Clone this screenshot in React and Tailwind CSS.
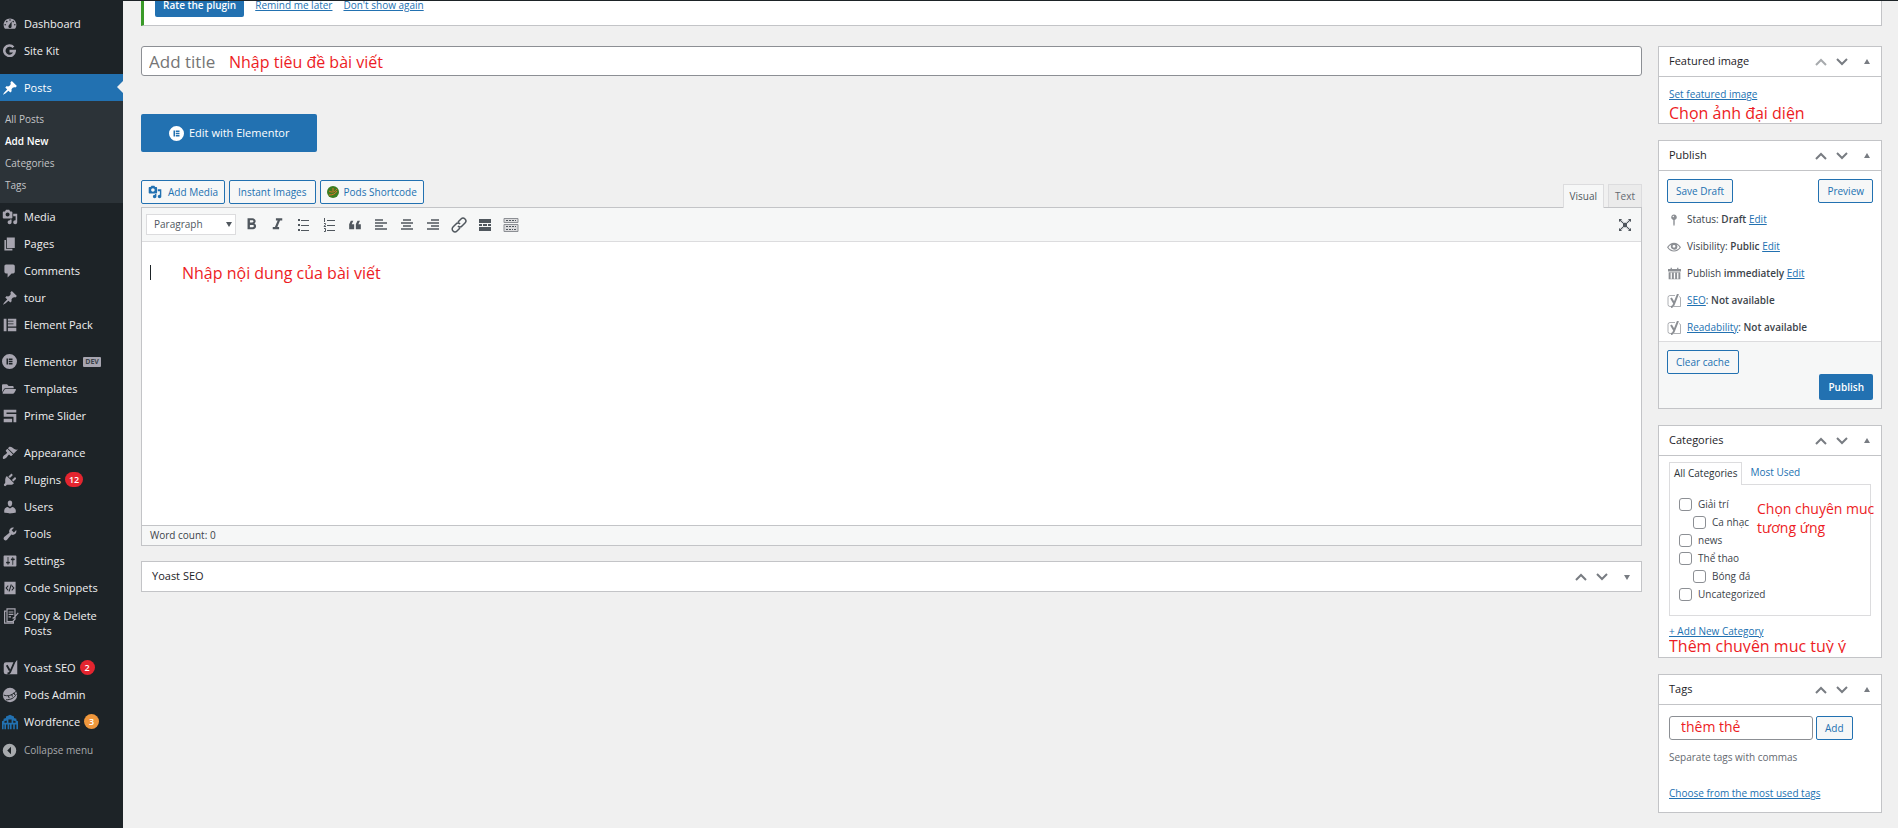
import { useState } from 'react'
import { FaFolderOpen } from 'react-icons/fa'
import { MdFormatBold, MdFormatItalic, MdFormatQuote } from 'react-icons/md'

const PATHS = {
  dashboard: 'M3.76 16h12.48c1.1-1.37 1.76-3.11 1.76-5 0-4.42-3.58-8-8-8s-8 3.58-8 8c0 1.89.66 3.63 1.76 5zM10 4c.55 0 1 .45 1 1s-.45 1-1 1-1-.45-1-1 .45-1 1-1zM6 6c.55 0 1 .45 1 1s-.45 1-1 1-1-.45-1-1 .45-1 1-1zm8 0c.55 0 1 .45 1 1s-.45 1-1 1-1-.45-1-1 .45-1 1-1zm-5.37 5.55L12 7v6c0 1.1-.9 2-2 2s-2-.9-2-2c0-.57.24-1.08.63-1.45zM4 10c.55 0 1 .45 1 1s-.45 1-1 1-1-.45-1-1 .45-1 1-1zm12 0c.55 0 1 .45 1 1s-.45 1-1 1-1-.45-1-1 .45-1 1-1z',
  pin: 'M10.44 3.02l1.82-1.82 6.36 6.35-1.83 1.82c-1.05-.68-2.48-.57-3.41.36l-.75.75c-.92.93-1.04 2.35-.35 3.41l-1.83 1.82-2.41-2.41-2.8 2.79c-.42.42-3.38 2.71-3.8 2.29s1.86-3.39 2.28-3.81l2.79-2.79L4.1 9.36l1.83-1.82c1.05.69 2.48.57 3.4-.36l.75-.75c.93-.92 1.05-2.35.36-3.41z',
  media: 'M13 11V4c0-.55-.45-1-1-1h-1.67L9 1H5L3.67 3H2c-.55 0-1 .45-1 1v7c0 .55.45 1 1 1h10c.55 0 1-.45 1-1zM7 4.5c1.38 0 2.5 1.12 2.5 2.5S8.38 9.5 7 9.5 4.5 8.38 4.5 7 5.62 4.5 7 4.5zM14 6h5v10.5c0 1.38-1.12 2.5-2.5 2.5S14 17.88 14 16.5s1.12-2.5 2.5-2.5c.17 0 .34.02.5.05V9h-3V6zm-4 8.05V13h2v3.5c0 1.38-1.12 2.5-2.5 2.5S7 17.88 7 16.5 8.12 14 9.5 14c.17 0 .34.02.5.05z',
  page: 'M6 15V2h10v13H6zm-1 1h8v2H3V5h2v11z',
  comment: 'M5 2h9c1.1 0 2 .9 2 2v7c0 1.1-.9 2-2 2h-2l-5 5v-5H5c-1.1 0-2-.9-2-2V4c0-1.1.9-2 2-2z',
  elementPack: 'M1 1h4v18H1zM7 1h12v11H7V9h8V8H7V5h8V4H7zM7 14h12v5H7z',
  elementor: 'M10 0a10 10 0 100 20 10 10 0 000-20zM6 6h2v8H6zM9 6h5v2H9zM9 9h5v2H9zM9 12h5v2H9z',
  primeSlider: 'M1 1h18v4H5v2h14v12h-4v-8H1zM1 14h12v5H1z',
  appearance: 'M14.48 11.06L7.41 3.99l1.5-1.5c.5-.56 2.3-.47 3.51.32 1.21.8 1.43 1.28 2.91 2.1 1.18.64 2.45 1.26 4.45.85zm-.71.71L6.7 4.7 4.93 6.47c-.39.39-.39 1.02 0 1.41l1.06 1.06c.39.39.39 1.03 0 1.42-.6.6-1.43 1.11-2.21 1.69-.35.26-.7.53-1.01.84C1.43 14.23.4 16.08 1.4 17.07c.99 1 2.84-.03 4.18-1.36.31-.31.58-.66.85-1.02.57-.78 1.08-1.61 1.69-2.21.39-.39 1.02-.39 1.41 0l1.06 1.06c.39.39 1.02.39 1.41 0z',
  plugins: 'M13.11 4.36L9.87 7.6 8 5.73l3.24-3.24c.35-.34 1.05-.2 1.56.32.52.51.66 1.21.31 1.55zm-8 1.77l.91-1.12 9.01 9.01-1.19.84c-.71.71-2.63 1.16-3.82 1.16H6.14L4.9 17.26c-.59.59-1.54.59-2.12 0-.59-.58-.59-1.53 0-2.12l1.24-1.24v-3.88c0-1.13.4-3.19 1.09-3.89zm7.26 3.97l3.24-3.24c.34-.35 1.04-.21 1.55.31.52.51.66 1.21.31 1.55l-3.24 3.25z',
  users: 'M10 9.25c-2.27 0-2.73-3.44-2.73-3.44C7 4.02 7.82 2 9.97 2c2.16 0 2.98 2.02 2.71 3.81 0 0-.41 3.44-2.68 3.44zm0 2.57L12.72 10c2.39 0 4.52 2.33 4.52 4.53v2.49s-3.65 1.13-7.24 1.13c-3.65 0-7.24-1.13-7.24-1.13v-2.49c0-2.25 1.94-4.48 4.47-4.48z',
  tools: 'M16.68 9.77c-1.34 1.34-3.3 1.67-4.95.99l-5.41 6.52c-.99.99-2.59.99-3.58 0s-.99-2.59 0-3.57l6.52-5.42c-.68-1.65-.35-3.61.99-4.95 1.28-1.28 3.12-1.62 4.72-1.06l-2.89 2.89 2.82 2.82 2.86-2.87c.53 1.58.18 3.39-1.08 4.65z',
  settings: 'M18 16V4c0-.55-.45-1-1-1H3c-.55 0-1 .45-1 1v12c0 .55.45 1 1 1h14c.55 0 1-.45 1-1zM8 11h1c.55 0 1 .45 1 1s-.45 1-1 1H8v1.5c0 .28-.22.5-.5.5s-.5-.22-.5-.5V13H6c-.55 0-1-.45-1-1s.45-1 1-1h1V5.5c0-.28.22-.5.5-.5s.5.22.5.5V11zm5-2h-1c-.55 0-1-.45-1-1s.45-1 1-1h1V5.5c0-.28.22-.5.5-.5s.5.22.5.5V7h1c.55 0 1 .45 1 1s-.45 1-1 1h-1v5.5c0 .28-.22.5-.5.5s-.5-.22-.5-.5V9z',
  snippets: 'M2 1h16v18H2zM7 6l-3.5 4L7 14l1-1-2.500-3L8 7zM11 5l-3 10h1.500l3-10zM13 6l-1 1 2.500 3-2.500 3 1 1 3.500-4z',
  collapse: 'M10 1a9 9 0 100 18 9 9 0 000-18zM12 5v10l-5-5z',
  wordfence: 'M0 19V9l2-1V6l3-1V3l3-1 2-1 2 1 3 1v2l3 1v2l2 1v10h-2v-6h-2v6h-2v-6h-2v6h-2v-6H9v6H7v-6H5v6H3v-6H2v6zM3 9v2h3V8zM8 7v4h4V7zM14 8v3h3V9z',
  postStatus: 'M14 6c0 1.860-1.280 3.410-3 3.860V16c0 1-1 3-1 3s-1-2-1-3V9.860C7.280 9.410 6 7.860 6 6c0-2.210 1.790-4 4-4s4 1.790 4 4zM8 5a1 1 0 102 0 1 1 0 00-2 0z',
  eye: 'M10 4C6 4 2.500 6.500 0 10.500 2.500 14.500 6 16.500 10 16.500s7.500-2 10-6C17.500 6.500 14 4 10 4zM2 10.500c1-1.600 2.400-2.900 4-3.700a5 5 0 008 5.700 5 5 0 000-5.700c1.600.8 3 2.100 4 3.700-2 3-4.800 4.500-8 4.500s-6-1.500-8-4.500zM10 7a2 2 0 110 4 2 2 0 010-4z',
  calendar: 'M4 1h2v2h8V1h2v2h4v4H0V3h4zM1 8h18v11H1zM4 9v9h2V9zM9 9v9h2V9zM14 9v9h2V9z',
}

function Icon({ name, className = 'size-4' }) {
  return (
    <svg viewBox="0 0 20 20" className={className} fill="currentColor" fillRule="evenodd" aria-hidden="true">
      <path d={PATHS[name]} />
    </svg>
  )
}

function SiteKitIcon() {
  return (
    <svg viewBox="0 0 20 20" className="ml-px size-[13px]" fill="none" stroke="currentColor" strokeWidth="4" aria-hidden="true">
      <path d="M16 5a8 8 0 102 6h-8" />
    </svg>
  )
}

function YoastIcon() {
  return (
    <svg viewBox="0 0 20 20" className="ml-px size-[15px]" aria-hidden="true">
      <path d="M4 3h12l3-3v19H4a3 3 0 01-3-3V6a3 3 0 013-3z" fill="currentColor" />
      <path d="M5 7l4 7M16 1l-6 14q-1 3-4 3" fill="none" stroke="#1d2327" strokeWidth="2.500" />
    </svg>
  )
}

function CopyIcon() {
  return (
    <svg viewBox="0 0 20 20" className="h-4 w-[18px]" fill="none" stroke="currentColor" strokeWidth="1.500" aria-hidden="true">
      <path d="M4 4H2v15h11v-2M5 1h10v13l-3 3H5zM7 5h6M7 8h6M7 11h3M19 6l-5 6-2 1" />
    </svg>
  )
}

function PodsIcon() {
  return (
    <svg viewBox="0 0 20 20" className="size-4" aria-hidden="true">
      <circle cx="10" cy="10" r="9" fill="currentColor" />
      <path d="M2 10c5 2 10 1 16-5M5 16c6 0 10-2 13-7M12 9l1 3M8 11l1 3M15 7l1 3" fill="none" stroke="#1d2327" strokeWidth="1.200" />
    </svg>
  )
}

const MENU = [
  [
    { label: 'Dashboard', icon: <Icon name="dashboard" /> },
    { label: 'Site Kit', icon: <SiteKitIcon /> },
  ],
  [{ label: 'Posts', icon: <Icon name="pin" />, current: true }],
  [
    { label: 'Media', icon: <Icon name="media" /> },
    { label: 'Pages', icon: <Icon name="page" /> },
    { label: 'Comments', icon: <Icon name="comment" /> },
    { label: 'tour', icon: <Icon name="pin" /> },
    { label: 'Element Pack', icon: <Icon name="elementPack" className="ml-px size-[14px]" /> },
  ],
  [
    { label: 'Elementor', icon: <Icon name="elementor" className="size-[15px]" />, tag: 'DEV' },
    { label: 'Templates', icon: <FaFolderOpen className="size-[14px]" /> },
    { label: 'Prime Slider', icon: <Icon name="primeSlider" className="ml-px size-[14px]" /> },
  ],
  [
    { label: 'Appearance', icon: <Icon name="appearance" /> },
    { label: 'Plugins', icon: <Icon name="plugins" />, count: 12 },
    { label: 'Users', icon: <Icon name="users" /> },
    { label: 'Tools', icon: <Icon name="tools" /> },
    { label: 'Settings', icon: <Icon name="settings" /> },
    { label: 'Code Snippets', icon: <Icon name="snippets" className="ml-px size-[14px]" /> },
    { label: 'Copy & Delete Posts', icon: <CopyIcon />, tall: true },
  ],
  [
    { label: 'Yoast SEO', icon: <YoastIcon />, count: 2 },
    { label: 'Pods Admin', icon: <PodsIcon /> },
    { label: 'Wordfence', icon: <Icon name="wordfence" className="size-4 text-[#2271b1]" />, count: 3, warn: true },
  ],
]

const SUBMENU = ['All Posts', 'Add New', 'Categories', 'Tags']

const CATEGORIES = [
  { name: 'Giải trí' },
  { name: 'Ca nhạc', child: true },
  { name: 'news' },
  { name: 'Thể thao' },
  { name: 'Bóng đá', child: true },
  { name: 'Uncategorized' },
]

const LINK = 'text-[#2271b1] underline'
const BUTTON = 'flex h-6 items-center justify-center rounded-[2px] border border-[#2271b1] bg-[#f6f7f7] text-[10px] text-[#2271b1]'
const NOTE = 'text-[#ed1c24]'

function MenuItem({ item }) {
  return (
    <li>
      <a
        href="#"
        className={`relative flex gap-1 pr-2 pl-[2px] text-[11px] ${item.tall ? 'h-[43px] items-start pt-[7px]' : 'h-[27px] items-center'} ${item.current ? 'bg-[#2271b1] text-white' : 'text-[#f0f0f1]'}`}
      >
        <span className={`flex w-[18px] shrink-0 items-center justify-start ${item.current ? 'text-white' : 'text-[#a7a5b0]'}`}>{item.icon}</span>
        <span className="leading-[15px]">{item.label}</span>
        {item.tag && <span className="ml-[2px] rounded-[1px] bg-[#a7a5b0] px-[2px] text-[7px] leading-[10px] font-bold text-[#3c434a]">{item.tag}</span>}
        {item.count && (
          <span className={`flex h-[15px] min-w-[15px] items-center justify-center rounded-full px-1 text-[9px] font-semibold text-white ${item.warn ? 'bg-[#f0973c]' : 'bg-[#e4252f]'}`}>
            {item.count}
          </span>
        )}
        {item.current && <span className="absolute top-[7px] right-0 border-y-[6px] border-r-[6px] border-y-transparent border-r-[#f0f0f0]" />}
      </a>
    </li>
  )
}

function Sidebar() {
  return (
    <nav className="w-[123px] shrink-0 bg-[#1d2327] pt-[9px]">
      {MENU.map((group, i) => (
        <ul key={i} className={i === 0 || i === 2 ? '' : 'mt-[10px]'}>
          {group.map((item) => (
            <MenuItem key={item.label} item={item} />
          ))}
          {i === 1 && (
            <li>
              <ul className="bg-[#2c3338] py-[7px] pl-[5px]">
                {SUBMENU.map((label) => (
                  <li key={label} className="flex h-[22px] items-center text-[10px]">
                    <a href="#" className={label === 'Add New' ? 'font-semibold text-white' : 'text-[#c3c4c7]'}>{label}</a>
                  </li>
                ))}
              </ul>
            </li>
          )}
        </ul>
      ))}
      <button className="flex h-[31px] items-center gap-1 pl-[2px] text-[10px] text-[#a7aaad]">
        <span className="w-[18px]"><Icon name="collapse" className="size-[15px]" /></span>
        Collapse menu
      </button>
    </nav>
  )
}

function Chevron({ up, faded }) {
  return (
    <svg viewBox="0 0 12 8" className={`h-2 w-3 ${faded ? 'text-[#a7aaad]' : 'text-[#787c82]'}`} fill="none" stroke="currentColor" strokeWidth="2" aria-hidden="true">
      <path d={up ? 'M1 7l5-5 5 5' : 'M1 1l5 5 5-5'} />
    </svg>
  )
}

function PanelHeader({ title, closed, first }) {
  return (
    <div className={`flex items-center pr-[11px] pl-[10px] ${closed ? 'h-[29px]' : 'h-[30px] border-b border-[#c3c4c7]'}`}>
      <h2 className="grow text-[11px] text-[#1d2327]">{title}</h2>
      <button aria-label={`Move ${title} up`} className="mr-[9px]"><Chevron up faded={first} /></button>
      <button aria-label={`Move ${title} down`} className="mr-4"><Chevron /></button>
      <button aria-label={`Toggle ${title}`}>
        <svg viewBox="0 0 6 6" className="size-[6px] text-[#787c82]" fill="currentColor" aria-hidden="true">
          <path d={closed ? 'M0 1h6L3 6z' : 'M0 5h6L3 0z'} />
        </svg>
      </button>
    </div>
  )
}

function Panel({ title, first, className = '', children }) {
  return (
    <section className={`border border-[#c3c4c7] bg-white ${className}`}>
      <PanelHeader title={title} first={first} closed={!children} />
      {children}
    </section>
  )
}

function LineIcon({ d, thin }) {
  return (
    <svg viewBox="0 0 16 16" className="size-4" fill="none" stroke="currentColor" strokeWidth={thin ? 1 : 1.5} aria-hidden="true">
      <path d={d} />
    </svg>
  )
}

const TOOLS = [
  ['Bold', <MdFormatBold className="size-[19px]" />],
  ['Italic', <MdFormatItalic className="size-[19px]" />],
  ['Bulleted list', <LineIcon thin d="M3 2.500h2M6 3.500h8M3 7.500h2M6 8.500h8M3 12.500h2M6 13.500h8M3 3.500h2M3 8.500h2M3 13.500h2" />],
  ['Numbered list', <LineIcon thin d="M3.500 1v4M6 3.500h8M3 6.500h1.500v1L3 9.500h2M6 8.500h8M3 11.500h1.500v3H3M6 13.500h8" />],
  ['Blockquote', <MdFormatQuote className="size-5 rotate-180" />],
  ['Align left', <LineIcon d="M2 3h8M2 6h12M2 9h8M2 12h12" />],
  ['Align center', <LineIcon d="M4 3h8M2 6h12M4 9h8M2 12h12" />],
  ['Align right', <LineIcon d="M6 3h8M2 6h12M6 9h8M2 12h12" />],
  ['Insert link', <LineIcon d="M7 5l3-3a2.500 2.500 0 014 4l-3 3a2.500 2.500 0 01-4 0M9 11l-3 3a2.500 2.500 0 01-4-4l3-3a2.500 2.500 0 014 0" />],
  ['Read more', (
    <svg viewBox="0 0 16 16" className="size-4" fill="currentColor" aria-hidden="true">
      <path d="M2 2h12v4H2zM2 7h3v2H2zM6 7h4v2H6zM11 7h3v2h-3zM2 10h12v4H2z" />
    </svg>
  )],
  ['Toolbar toggle', (
    <svg viewBox="0 0 16 16" className="size-4" aria-hidden="true">
      <path d="M1 1.500h14v4H1zM1 7.500h14v7H1z" fill="#dcdcde" stroke="#8c8f94" />
      <path d="M3 3.500h10M3 9.500h10M3 12.500h2M6 12.500h4M11 12.500h2" stroke="#50575e" strokeDasharray="2 1" />
    </svg>
  )],
]

function Editor() {
  return (
    <div>
      <div className="flex h-[27px] items-start justify-between">
        <div className="flex gap-1">
          <button className={`${BUTTON} gap-[6px] px-[6px]`}><Icon name="media" className="size-[14px]" />Add Media</button>
          <button className={`${BUTTON} px-2`}>Instant Images</button>
          <button className={`${BUTTON} gap-[5px] px-[6px]`}>
            <svg viewBox="0 0 12 12" className="size-3" aria-hidden="true">
              <circle cx="6" cy="6" r="6" fill="#3d7d1f" />
              <path d="M2 5c3 2 6 1 8-2M2 9c4 0 6-1 8-4M6 2v3" stroke="#e0722a" fill="none" />
            </svg>
            Pods Shortcode
          </button>
        </div>
        <div className="flex gap-1 self-end text-[10px]">
          <button className="relative z-10 -mb-px h-6 border border-b-0 border-[#dcdcde] bg-[#f6f7f7] px-[6px] text-[#50575e]">Visual</button>
          <button className="h-[23px] border border-b-0 border-[#dcdcde] bg-[#ebebeb] px-[6px] text-[#646970]">Text</button>
        </div>
      </div>
      <div className="border border-[#c3c4c7]">
        <div className="flex h-[34px] items-center border-b border-[#dcdcde] bg-[#f6f7f7] pr-2 pl-1 text-[#50575e]">
          <div className="relative mr-[2px]">
            <select aria-label="Format" className="block h-[21px] w-[90px] appearance-none border border-[#dcdcde] bg-white pl-[7px] text-[10px]">
              <option>Paragraph</option>
            </select>
            <span className="pointer-events-none absolute top-2 right-1 border-x-[3px] border-t-[5px] border-x-transparent border-t-[#50575e]" />
          </div>
          {TOOLS.map(([label, icon]) => (
            <button key={label} aria-label={label} className="flex size-[26px] items-center justify-center">{icon}</button>
          ))}
          <button aria-label="Distraction-free writing" className="ml-auto">
            <svg viewBox="0 0 16 16" className="size-4" fill="currentColor" aria-hidden="true">
              <path d="M2 2h3v1l2 2h2l2-2V2h3v3h-1l-3 2v2l3 2h1v3h-3v-1l-2-2H7l-2 2v1H2v-3h1l3-2V7L3 5H2z" opacity="0.250" />
              <path d="M2 2h3L2 5zM14 2v3l-3-3zM2 14v-3l3 3zM14 14h-3l3-3zM6 6h4v4H6z" />
              <path d="M3 3l10 10M13 3L3 13" stroke="currentColor" />
            </svg>
          </button>
        </div>
        <div className="flex h-[283px] items-start bg-white pt-5 pl-2">
          <span className="mt-[3px] h-[15px] w-px bg-[#1d2327]" />
          <p className={`ml-[31px] text-[16px] leading-[22px] ${NOTE}`}>Nhập nội dung của bài viết</p>
        </div>
        <div className="flex h-5 items-center border-t border-[#c3c4c7] bg-[#f6f7f7] pl-2 text-[10px] text-[#3c434a]">Word count: 0</div>
      </div>
    </div>
  )
}

function PublishRow({ icon, children }) {
  return (
    <li className="flex h-[27px] items-center gap-[6px]">
      <span className="flex w-[14px] justify-center text-[#8c8f94]">{icon}</span>
      <span>{children}</span>
    </li>
  )
}

function YoastMark() {
  return (
    <svg viewBox="0 0 14 14" className="size-[14px]" fill="none" stroke="currentColor" aria-hidden="true">
      <path d="M8 1.500H3a2 2 0 00-2 2v7a2 2 0 002 2h1M12 2.500l1.500 1v9H7" opacity="0.700" />
      <path d="M4 4l3 5M11 0L7 10q-1 3-3 3" strokeWidth="2" />
    </svg>
  )
}

function PublishPanel() {
  return (
    <Panel title="Publish">
      <div className="px-2 pt-2">
        <div className="flex justify-between">
          <button className={`${BUTTON} px-2`}>Save Draft</button>
          <button className={`${BUTTON} px-2`}>Preview</button>
        </div>
        <ul className="pt-[3px] text-[10px] text-[#3c434a]">
          <PublishRow icon={<Icon name="postStatus" className="size-[14px]" />}>Status: <b className="font-semibold">Draft</b> <a href="#" className={LINK}>Edit</a></PublishRow>
          <PublishRow icon={<Icon name="eye" className="size-[14px]" />}>Visibility: <b className="font-semibold">Public</b> <a href="#" className={LINK}>Edit</a></PublishRow>
          <PublishRow icon={<Icon name="calendar" className="size-[13px]" />}>Publish <b className="font-semibold">immediately</b> <a href="#" className={LINK}>Edit</a></PublishRow>
          <PublishRow icon={<YoastMark />}><a href="#" className={LINK}>SEO</a>: <b className="font-semibold">Not available</b></PublishRow>
          <PublishRow icon={<YoastMark />}><a href="#" className={LINK}>Readability</a>: <b className="font-semibold">Not available</b></PublishRow>
        </ul>
      </div>
      <div className="border-t border-[#dcdcde] bg-[#f6f7f7] p-2">
        <button className={`${BUTTON} px-2`}>Clear cache</button>
        <button className="ml-auto block h-[26px] rounded-[2px] bg-[#2271b1] px-[9px] text-[10px] font-semibold text-white">Publish</button>
      </div>
    </Panel>
  )
}

function CategoriesPanel() {
  const [checked, setChecked] = useState({})
  return (
    <Panel title="Categories">
      <div className="px-[10px] pt-[6px] pb-1">
        <div className="flex h-[22px] text-[10px]">
          <button className="relative z-10 -mb-px border border-b-0 border-[#dcdcde] bg-white px-1 pb-[2px] text-[#2c3338]">All Categories</button>
          <button className="px-2 pb-[2px] text-[#2271b1]">Most Used</button>
        </div>
        <div className="relative border border-[#dcdcde] px-[9px] pt-[10px] pb-3">
          <ul>
            {CATEGORIES.map(({ name, child }) => (
              <li key={name} className={child ? 'pl-[14px]' : ''}>
                <label className="flex h-[18px] items-center gap-[6px] text-[10px] text-[#3c434a]">
                  <input
                    type="checkbox"
                    checked={!!checked[name]}
                    onChange={() => setChecked({ ...checked, [name]: !checked[name] })}
                    className="size-[13px] appearance-none rounded-[3px] border border-[#8c8f94] bg-white checked:bg-[#2271b1]"
                  />
                  {name}
                </label>
              </li>
            ))}
          </ul>
          <p className={`absolute top-[14px] right-0 w-[113px] text-[14px] leading-[19px] whitespace-nowrap ${NOTE}`}>
            Chọn chuyên muc<br />tương ứng
          </p>
        </div>
        <a href="#" className={`mt-2 block text-[10px] leading-[15px] ${LINK}`}>+ Add New Category</a>
        <p className={`h-[14px] overflow-hidden text-[16px] leading-[14px] ${NOTE}`}>Thêm chuyên mục tuỳ ý</p>
      </div>
    </Panel>
  )
}

function TagsPanel() {
  return (
    <Panel title="Tags">
      <div className="px-[10px] pt-[11px] pb-[11px] text-[10px]">
        <div className="flex gap-[3px]">
          <input aria-label="Add tags" defaultValue="thêm thẻ" className={`h-6 w-36 rounded-[3px] border border-[#8c8f94] bg-white px-[11px] pb-1 text-[14px] ${NOTE}`} />
          <button className={`${BUTTON} px-2`}>Add</button>
        </div>
        <p className="mt-[10px] leading-[15px] text-[#646970]">Separate tags with commas</p>
        <a href="#" className={`mt-[21px] block leading-[15px] ${LINK}`}>Choose from the most used tags</a>
      </div>
    </Panel>
  )
}

export default function App() {
  const [title, setTitle] = useState('')

  return (
    <div className="min-h-screen bg-white pr-[6px] pb-[6px] font-['Open_Sans','Noto_Sans',sans-serif]">
      <div className="flex min-h-[calc(100vh-6px)] border-t border-[#1d2327] bg-[#f0f0f0]">
        <Sidebar />
        <main className="min-w-0 grow pr-4 pb-[15px] pl-[18px]">
          {/* Plugin review notice, scrolled under the admin bar */}
          <div className="flex h-[25px] items-start border-r border-b border-l-[3px] border-[#c3c4c7] border-l-[#3a9b28] bg-white pl-[11px] text-[10px] leading-[9px]">
            <button className="rounded-b-[2px] bg-[#2271b1] px-2 pb-[7px] font-semibold text-white">Rate the plugin</button>
            <a href="#" className={`ml-[11px] ${LINK}`}>Remind me later</a>
            <a href="#" className={`ml-[11px] ${LINK}`}>Don't show again</a>
          </div>

          <div className="mt-5 flex gap-4">
            <div className="min-w-0 grow">
              <div className="relative">
                <input
                  aria-label="Add title"
                  placeholder="Add title"
                  value={title}
                  onChange={(e) => setTitle(e.target.value)}
                  className="block h-[30px] w-full rounded-[3px] border border-[#8c8f94] bg-white px-[7px] text-[17px] placeholder:text-[#757575]"
                />
                <span className={`pointer-events-none absolute top-[5px] left-[88px] text-[16px] leading-[22px] ${NOTE}`}>Nhập tiêu đề bài viết</span>
              </div>

              <button className="mt-[38px] mb-7 flex h-[38px] items-center gap-[5px] rounded-[2px] bg-[#2271b1] px-7 text-[11px] text-white">
                <Icon name="elementor" className="size-[15px]" />
                Edit with Elementor
              </button>

              <Editor />
              <Panel title="Yoast SEO" className="mt-[15px]" />
            </div>

            <aside className="flex w-56 shrink-0 flex-col gap-4">
              <Panel title="Featured image" first>
                <div className="px-[10px] pt-[10px]">
                  <a href="#" className={`block text-[10px] leading-[15px] ${LINK}`}>Set featured image</a>
                  <p className={`h-[21px] text-[16px] leading-[23px] ${NOTE}`}>Chọn ảnh đại diện</p>
                </div>
              </Panel>
              <PublishPanel />
              <CategoriesPanel />
              <TagsPanel />
            </aside>
          </div>
        </main>
      </div>
    </div>
  )
}
